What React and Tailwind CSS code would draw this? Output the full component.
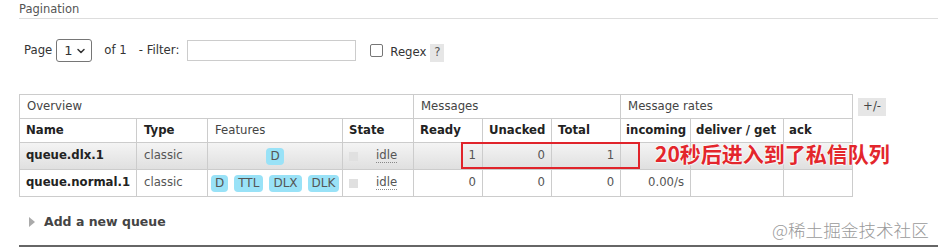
import { ChevronDown } from 'lucide-react';

const cols = [117, 71, 135, 71, 69, 69, 69, 70, 93, 69];

function Badge({ children }) {
  return (
    <span className="inline-block rounded-[4px] bg-[#99e2f7] px-[4px] leading-[17px] text-[12px] text-[#555] mx-[3px]">
      {children}
    </span>
  );
}

function StateCell() {
  return (
    <td className="border border-[#ccc] pl-[6px]">
      <div className="flex items-center">
        <span className="inline-block w-[9px] h-[9px] bg-[#e0e0e0]" />
        <span className="ml-[18px] text-[#555] border-b border-dotted border-[#888] leading-[13px]">idle</span>
      </div>
    </td>
  );
}

export default function App() {
  const num = 'border border-[#ccc] text-right pr-[6px] text-[#555]';
  return (
    <div className="relative w-[938px] h-[247px] overflow-hidden bg-white font-['DejaVu_Sans','Liberation_Sans',sans-serif] text-[11.7px] text-[#333] pl-[19px]">
      {/* Pagination */}
      <div className="border-b border-[#ddd] h-[19px] pt-[1px] text-[#555] text-[11.5px]">Pagination</div>

      <div className="flex items-center h-[23px] mt-[20px] pl-[5px]">
        <span>Page</span>
        <div className="ml-[4px] w-[36px] h-[23px] border border-[#767676] rounded-[3px] flex items-center justify-between pl-[7px] pr-[4px] text-[13px]">
          <span>1</span>
          <ChevronDown size={12} strokeWidth={3} />
        </div>
        <span className="ml-[12px]">of 1</span>
        <span className="ml-[12px]">- Filter:</span>
        <div className="ml-[8px] w-[169px] h-[21px] border border-[#ccc]" />
        <div className="ml-[14px] w-[13px] h-[13px] border border-[#767676] rounded-[2px]" />
        <span className="ml-[7px] mt-[4px]">Regex</span>
        <span className="ml-[4px] mt-[4px] bg-[#e6e6e6] text-[#555] w-[14px] h-[18px] flex items-center justify-center">?</span>
      </div>

      {/* Table */}
      <div className="flex items-start mt-[32px]">
        <table className="table-fixed border-collapse w-[833px]">
          <colgroup>
            {cols.map((w, i) => <col key={i} style={{ width: w }} />)}
          </colgroup>
          <thead>
            <tr className="h-[24px]">
              <th colSpan={4} className="border border-[#ccc] text-left font-normal pl-[7px] text-[#444]">Overview</th>
              <th colSpan={3} className="border border-[#ccc] text-left font-normal pl-[7px] text-[#444]">Messages</th>
              <th colSpan={3} className="border border-[#ccc] text-left font-normal pl-[7px] text-[#444]">Message rates</th>
            </tr>
            <tr className="h-[24px] text-[#222]">
              <th className="border border-[#ccc] text-left pl-[6px]">Name</th>
              <th className="border border-[#ccc] text-left pl-[7px]">Type</th>
              <th className="border border-[#ccc] text-left pl-[7px] font-normal text-[#444]">Features</th>
              <th className="border border-[#ccc] text-left pl-[6px]">State</th>
              <th className="border border-[#ccc] text-left pl-[6px]">Ready</th>
              <th className="border border-[#ccc] text-left pl-[6px]">Unacked</th>
              <th className="border border-[#ccc] text-left pl-[6px]">Total</th>
              <th className="border border-[#ccc] text-left pl-[5px]">incoming</th>
              <th className="border border-[#ccc] text-left pl-[5px]">deliver / get</th>
              <th className="border border-[#ccc] text-left pl-[5px]">ack</th>
            </tr>
          </thead>
          <tbody>
            <tr className="h-[27px] bg-gradient-to-b from-[#f4f4f4] to-[#dfdfdf]">
              <td className="border border-[#ccc] pl-[6px] font-bold text-[#222]">queue.dlx.1</td>
              <td className="border border-[#ccc] pl-[7px] text-[#555]">classic</td>
              <td className="border border-[#ccc] text-center pt-[2px]"><Badge>D</Badge></td>
              <StateCell />
              <td className={num}>1</td>
              <td className={num}>0</td>
              <td className={num}>1</td>
              <td className="border border-[#ccc]" />
              <td className="border border-[#ccc]" />
              <td className="border border-[#ccc]" />
            </tr>
            <tr className="h-[27px] bg-white">
              <td className="border border-[#ccc] pl-[6px] font-bold text-[#222]">queue.normal.1</td>
              <td className="border border-[#ccc] pl-[7px] text-[#555]">classic</td>
              <td className="border border-[#ccc] text-center pt-[2px] whitespace-nowrap">
                <Badge>D</Badge><Badge>TTL</Badge><Badge>DLX</Badge><Badge>DLK</Badge>
              </td>
              <StateCell />
              <td className={num}>0</td>
              <td className={num}>0</td>
              <td className={num}>0</td>
              <td className={num}>0.00/s</td>
              <td className="border border-[#ccc]" />
              <td className="border border-[#ccc]" />
            </tr>
          </tbody>
        </table>
        <span className="ml-[5px] mt-[4px] w-[28px] h-[18px] bg-[#e6e6e6] text-[#444] flex items-center justify-center">+/-</span>
      </div>

      {/* Add a new queue */}
      <div className="flex items-center h-[24px] mt-[13px] pl-[10px] text-[#444] font-bold text-[12.5px]">
        <svg width="6" height="10" viewBox="0 0 6 10"><path d="M0 0 L6 5 L0 10 Z" fill="#aaa" /></svg>
        <span className="ml-[9px]">Add a new queue</span>
      </div>
      <div className="absolute left-[19px] right-0 top-[245px] h-[2px] bg-[#666]" />

      {/* Annotation overlay */}
      <div className="absolute left-[461px] top-[142px] w-[179px] h-[27px] border-2 border-[#e0242b]" />
      <div className="absolute left-[655px] top-[139px] text-[21px] font-bold text-[#e3262c] font-['Noto_Sans_CJK_SC',sans-serif] leading-[28px] [text-shadow:0_0_2px_#fff,0_0_2px_#fff,0_0_2px_#fff]">
        20秒后进入到了私信队列
      </div>

      {/* Watermark */}
      <div className="absolute left-[772px] top-[219px] text-[17.6px] font-light text-[#9a9a9a] font-['Noto_Sans_CJK_SC',sans-serif] leading-[22px]">
        @稀土掘金技术社区
      </div>
    </div>
  );
}
